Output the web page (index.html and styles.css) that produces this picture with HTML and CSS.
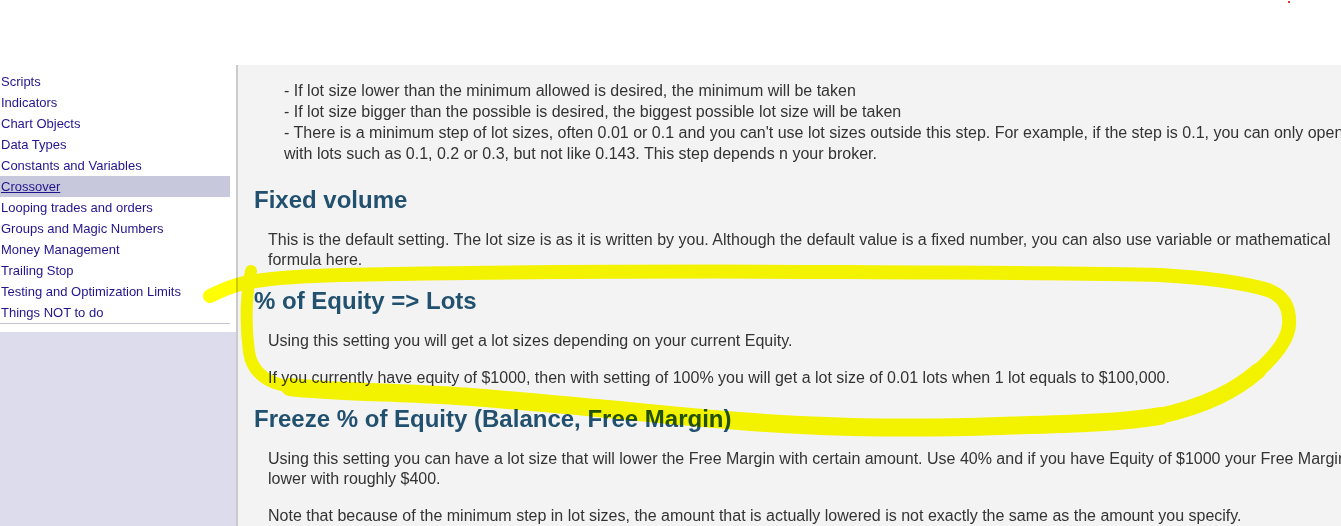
FILE: index.html
```html
<!DOCTYPE html>
<html lang="en">
<head>
<meta charset="utf-8">
<title>Money Management</title>
<link rel="stylesheet" href="styles.css">
</head>
<body>
<div class="page">
  <header class="top">
    <span class="top-dot"></span>
  </header>
  <div class="body-row">
    <aside class="sidebar">
      <nav class="nav">
        <a href="#">Scripts</a>
        <a href="#">Indicators</a>
        <a href="#">Chart Objects</a>
        <a href="#">Data Types</a>
        <a href="#">Constants and Variables</a>
        <a href="#" class="current">Crossover</a>
        <a href="#">Looping trades and orders</a>
        <a href="#">Groups and Magic Numbers</a>
        <a href="#">Money Management</a>
        <a href="#">Trailing Stop</a>
        <a href="#">Testing and Optimization Limits</a>
        <a href="#">Things NOT to do</a>
      </nav>
      <div class="sidebar-gap"></div>
      <div class="sidebar-fill"></div>
    </aside>
    <main class="content">
      <div class="notes">
        - If lot size lower than the minimum allowed is desired, the minimum will be taken<br>
        - If lot size bigger than the possible is desired, the biggest possible lot size will be taken<br>
        - There is a minimum step of lot sizes, often 0.01 or 0.1 and you can't use lot sizes outside this step. For example, if the step is 0.1, you can only open with lots such as 0.1, 0.2 or 0.3, but not like 0.143. This step depends n your broker.
      </div>

      <h2>Fixed volume</h2>
      <p>This is the default setting. The lot size is as it is written by you. Although the default value is a fixed number, you can also use variable or mathematical formula here.</p>

      <h2>% of Equity =&gt; Lots</h2>
      <p>Using this setting you will get a lot sizes depending on your current Equity.</p>
      <p>If you currently have equity of $1000, then with setting of 100% you will get a lot size of 0.01 lots when 1 lot equals to $100,000.</p>

      <h2>Freeze % of Equity (Balance, Free Margin)</h2>
      <p>Using this setting you can have a lot size that will lower the Free Margin with certain amount. Use 40% and if you have Equity of $1000 your Free Margin will lower with roughly $400.</p>
      <p>Note that because of the minimum step in lot sizes, the amount that is actually lowered is not exactly the same as the amount you specify.</p>
    </main>
  </div>

  <!-- hand-drawn marker loop around the "% of Equity" section -->
  <svg class="marker" width="1400" height="526" viewBox="0 0 1400 526" aria-hidden="true">
    <path class="stroke-thin" d="M210 296 C222 290 232 286 244 283 C270 278 300 276 340 275 C500 272 680 271 850 272 C1000 273 1100 273 1160 275 C1210 278 1245 283 1268 290 C1286 297 1290 310 1289 325 C1288 340 1276 355 1258 371"/>
    <path class="stroke-mid" d="M1258 371 C1236 390 1208 405 1160 416"/>
    <path class="stroke-wide" d="M1160 416 C1120 423 1070 424 1000 426 C940 428 880 429 800 425 C720 421 660 414 597 408 C530 402 480 397 440 395 C380 392 320 391 290 387"/>
    <path class="stroke-left" d="M290 387 C266 383 252 372 249 352 C245 322 246 296 251 271"/>
  </svg>
</div>
</body>
</html>
```

FILE: styles.css
```css
html, body {
  margin: 0;
  padding: 0;
  overflow: hidden;
  background: #ffffff;
}

.page {
  position: relative;
  width: 1400px;
  height: 526px;
  font-family: "Liberation Sans", Arial, sans-serif;
}

/* white top band */
.top {
  height: 65px;
  padding: 1px 0 0 1288px;
  box-sizing: border-box;
  background: #ffffff;
}

.top-dot {
  display: block;
  width: 2px;
  height: 2px;
  background: #e8342a;
}

.body-row {
  display: flex;
  height: 461px;
}

/* left navigation column */
.sidebar {
  width: 236px;
  flex: none;
  display: flex;
  flex-direction: column;
  background: #ffffff;
}

.nav {
  width: 230px;
  padding-top: 6px;
  display: flex;
  flex-direction: column;
  border-bottom: 1px solid #c4c4d8;
}

.nav a {
  display: block;
  height: 21px;
  line-height: 21px;
  padding-left: 1px;
  font-size: 13px;
  color: #22148c;
  text-decoration: none;
  white-space: nowrap;
}

.nav a.current {
  background: #c8c8dc;
  text-decoration: underline;
}

.sidebar-gap {
  height: 8px;
}

.sidebar-fill {
  flex: 1;
  background: #dcdcec;
}

/* article area */
.content {
  flex: 1;
  background: #f3f3f3;
  border-left: 2px solid #cbcbcb;
  padding: 15px 3px 0 16px;
  color: #333333;
  font-size: 16px;
}

.notes {
  margin: 0 30px 22px 30px;
  line-height: 21px;
}

.content h2 {
  margin: 0 0 16px;
  font-size: 24px;
  line-height: 28px;
  font-weight: bold;
  color: #22506f;
}

.content p {
  margin: 0 14px 17px 14px;
  line-height: 20px;
}

/* annotation overlay */
.marker {
  position: absolute;
  left: 0;
  top: 0;
  pointer-events: none;
  mix-blend-mode: multiply;
}

.marker path {
  fill: none;
  stroke: #ffff00;
  stroke-linecap: round;
  stroke-linejoin: round;
}

.marker .stroke-thin {
  stroke-width: 14;
}

.marker .stroke-mid {
  stroke-width: 16;
}

.marker .stroke-wide {
  stroke-width: 18;
}

.marker .stroke-left {
  stroke-width: 12;
}
```
